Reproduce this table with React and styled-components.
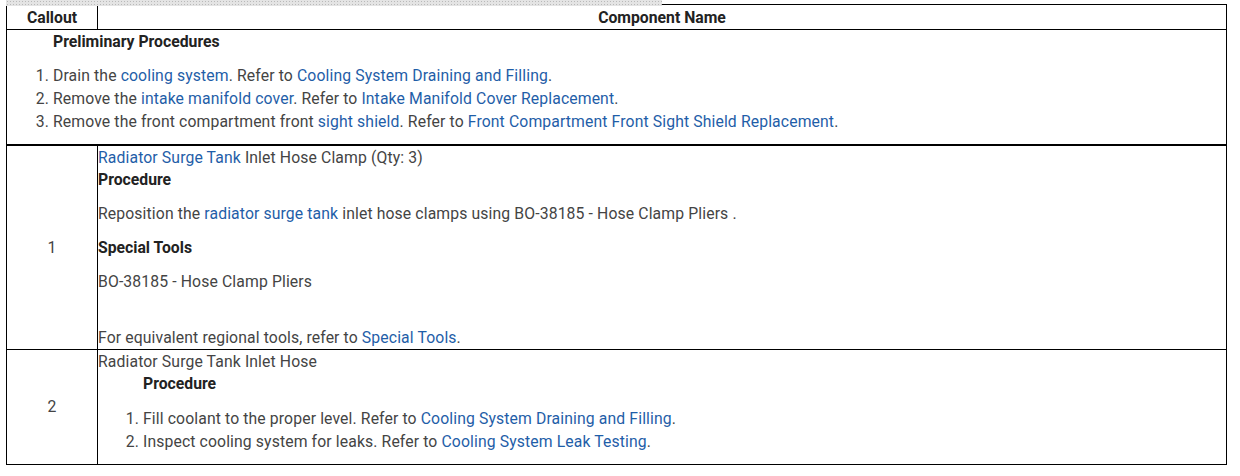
import React from 'react'
import styled, { createGlobalStyle } from 'styled-components'

const Global = createGlobalStyle`
body {
  margin: 0;
  background: #fff;
  font-family: Roboto, "Liberation Sans", sans-serif;
  font-size: 15.75px;
  color: #444;
}
`;

const Page = styled.div`
position: relative;
padding: 4px 13px 0 6px;
`;

const ScrollStrip = styled.div`
position: absolute;
top: 0;
left: 6px;
width: 656px;
height: 6px;
background-color: #e4e4e4;
background-image: radial-gradient(#b9b9b9 0.7px, transparent 0.8px);
background-size: 3px 3px;
`;

const Table = styled.table`
width: 100%;
border-collapse: collapse;
table-layout: fixed;
`;

const Head = styled.th`
border: 1px solid #000;
height: 24px;
padding: 0;
font-weight: 700;
color: #222;
text-align: center;
width: ${p => p.$w || 'auto'};
`;

const Cell = styled.td`
border: 1px solid #000;
border-top-width: ${p => p.$thick ? '2px' : '1px'};
padding: ${p => p.$pad || '0'};
vertical-align: ${p => p.$mid ? 'middle' : 'top'};
text-align: ${p => p.$mid ? 'center' : 'left'};
line-height: 22px;
letter-spacing: 0.12px;
`;

const Link = styled.span`
color: #1f5ea8;
`;

const Title = styled.div`
font-weight: 700;
color: #222;
letter-spacing: 0;
margin: ${p => p.$m || '0'};
padding-left: ${p => p.$indent || '0'};
`;

const Para = styled.p`
margin: ${p => p.$m || '0'};
`;

const Steps = styled.ol`
margin: ${p => p.$m || '0'};
padding-left: ${p => p.$indent};
line-height: 23px;
`;

const App = () => {
  return (
    <Page>
      <Global />
      <ScrollStrip />
      <Table>
        <thead>
          <tr>
            <Head $w="90px">Callout</Head>
            <Head>Component Name</Head>
          </tr>
        </thead>
        <tbody>
          <tr>
            <Cell colSpan={2} $pad="1px 0 11px 0">
              <Title $indent="46px">Preliminary Procedures</Title>
              <Steps $m="11px 0 0 0" $indent="46px">
                <li>Drain the <Link>cooling system</Link>. Refer to <Link>Cooling System Draining and Filling</Link>.</li>
                <li>Remove the <Link>intake manifold cover</Link>. Refer to <Link>Intake Manifold Cover Replacement</Link>.</li>
                <li>Remove the front compartment front <Link>sight shield</Link>. Refer to <Link>Front Compartment Front Sight Shield Replacement</Link>.</li>
              </Steps>
            </Cell>
          </tr>
          <tr>
            <Cell $thick $mid>1</Cell>
            <Cell $thick $pad="1px 0 0 0">
              <Para><Link>Radiator Surge Tank</Link> Inlet Hose Clamp (Qty: 3)</Para>
              <Title>Procedure</Title>
              <Para $m="12px 0 0 0">Reposition the <Link>radiator surge tank</Link> inlet hose clamps using BO-38185 - Hose Clamp Pliers .</Para>
              <Title $m="12px 0 0 0">Special Tools</Title>
              <Para $m="12px 0 0 0">BO-38185 - Hose Clamp Pliers</Para>
              <Para $m="34px 0 0 0">For equivalent regional tools, refer to <Link>Special Tools</Link>.</Para>
            </Cell>
          </tr>
          <tr>
            <Cell $mid>2</Cell>
            <Cell $pad="1px 0 11px 0">
              <Para>Radiator Surge Tank Inlet Hose</Para>
              <Title $indent="45px">Procedure</Title>
              <Steps $m="12px 0 0 0" $indent="45px">
                <li>Fill coolant to the proper level. Refer to <Link>Cooling System Draining and Filling</Link>.</li>
                <li>Inspect cooling system for leaks. Refer to <Link>Cooling System Leak Testing</Link>.</li>
              </Steps>
            </Cell>
          </tr>
        </tbody>
      </Table>
    </Page>
  )
}

export default App
